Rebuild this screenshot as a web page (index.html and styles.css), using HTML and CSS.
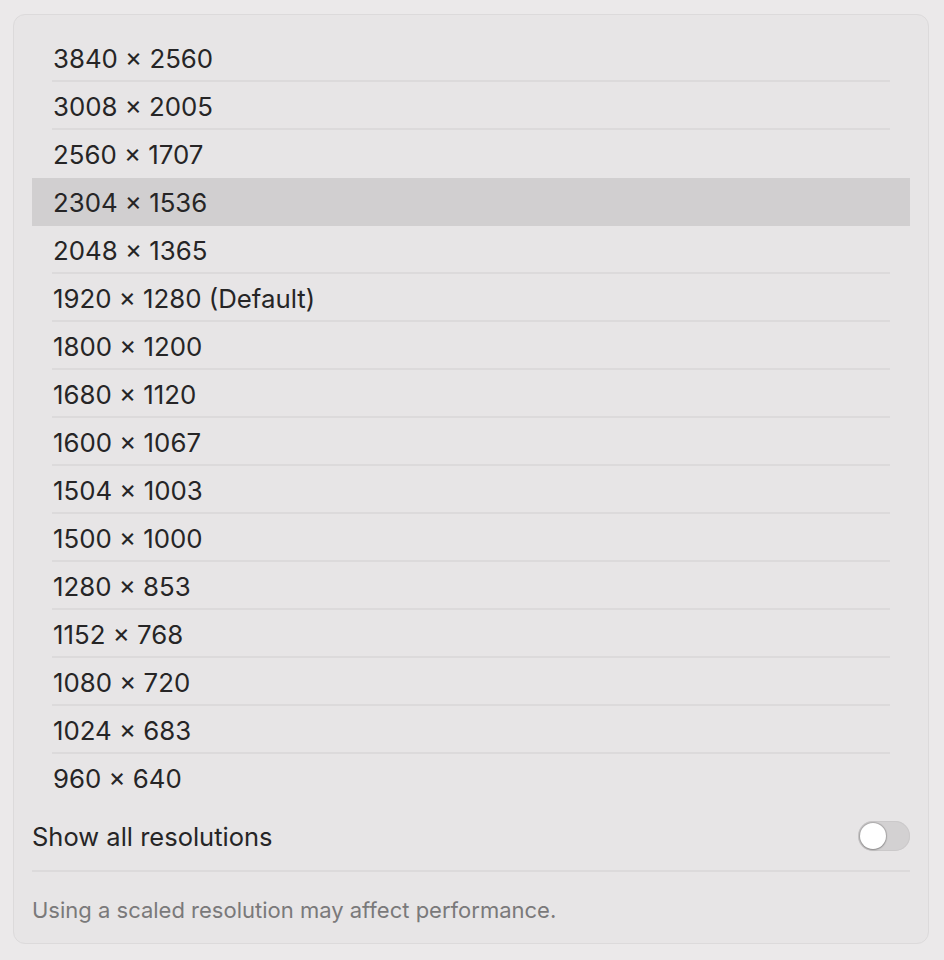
FILE: index.html
```html
<!DOCTYPE html>
<html>
<head>
<meta charset="utf-8">
<link rel="stylesheet" href="styles.css">
</head>
<body>
<div class="card">
  <ul class="list">
    <li class="row">3840 × 2560</li>
    <li class="row">3008 × 2005</li>
    <li class="row before-selected">2560 × 1707</li>
    <li class="row selected">2304 × 1536</li>
    <li class="row">2048 × 1365</li>
    <li class="row">1920 × 1280 (Default)</li>
    <li class="row">1800 × 1200</li>
    <li class="row">1680 × 1120</li>
    <li class="row">1600 × 1067</li>
    <li class="row">1504 × 1003</li>
    <li class="row">1500 × 1000</li>
    <li class="row">1280 × 853</li>
    <li class="row">1152 × 768</li>
    <li class="row">1080 × 720</li>
    <li class="row">1024 × 683</li>
    <li class="row last">960 × 640</li>
  </ul>
  <div class="setting">
    <span class="setting-label">Show all resolutions</span>
    <span class="toggle"><span class="knob"></span></span>
  </div>
  <div class="footer">Using a scaled resolution may affect performance.</div>
</div>
</body>
</html>
```

FILE: styles.css
```css
html, body {
  margin: 0;
  padding: 0;
}
body {
  background: #ebe9ea;
  padding: 14px 15px 15px 13px;
  font-family: "Inter", "Liberation Sans", sans-serif;
  color: #262526;
}
.card {
  background: #e7e5e6;
  border: 1px solid #dcdadb;
  border-radius: 12px;
  padding: 19px 18px 0 18px;
}
.list {
  list-style: none;
  margin: 0;
  padding: 0;
}
.row {
  position: relative;
  height: 48px;
  box-sizing: border-box;
  display: flex;
  align-items: center;
  padding-left: 21px;
  padding-top: 1px;
  font-size: 25.8px;
}
.row::after {
  content: "";
  position: absolute;
  left: 20px;
  right: 20px;
  bottom: 0;
  height: 2px;
  background: #dcdadb;
}
.row.selected {
  background: #d1cfd0;
}
.row.selected::after,
.row.before-selected::after,
.row.last::after {
  display: none;
}
.setting {
  height: 68px;
  display: flex;
  align-items: center;
  justify-content: space-between;
  border-bottom: 2px solid #dcdadb;
  font-size: 25.5px;
}
.toggle {
  width: 52px;
  height: 30px;
  border-radius: 15px;
  background: #d3d1d2;
  box-shadow: inset 0 0 0 1px #cbc9ca;
  display: flex;
  align-items: center;
  padding-left: 2px;
  box-sizing: border-box;
}
.knob {
  width: 26px;
  height: 26px;
  border-radius: 50%;
  background: #ffffff;
  box-shadow: 0 0 1px 1px rgba(0,0,0,0.18), 0 1px 2px rgba(0,0,0,0.2);
}
.footer {
  height: 71px;
  box-sizing: border-box;
  padding-top: 4px;
  display: flex;
  align-items: center;
  font-size: 22px;
  color: #7a797a;
}
```
